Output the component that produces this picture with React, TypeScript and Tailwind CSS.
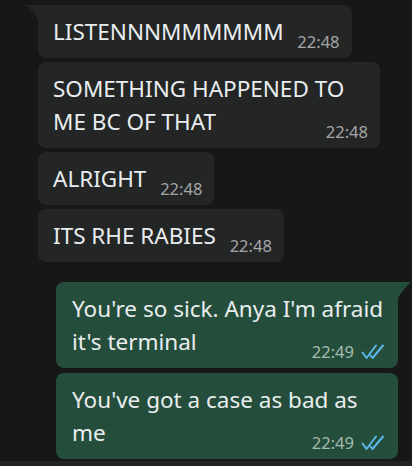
import React from 'react';

type Msg = { text: string; time: string; out?: boolean; first?: boolean };

const MESSAGES: Msg[] = [
  { text: 'LISTENNNMMMMMM', time: '22:48', first: true },
  { text: 'SOMETHING HAPPENED TO ME BC OF THAT', time: '22:48' },
  { text: 'ALRIGHT', time: '22:48' },
  { text: 'ITS RHE RABIES', time: '22:48' },
  { text: "You're so sick. Anya I'm afraid it's terminal", time: '22:49', out: true, first: true },
  { text: "You've got a case as bad as me", time: '22:49', out: true },
];

const DoubleTick = () => (
  <svg width="25" height="16" viewBox="0 0 25 16" fill="none" stroke="#5cb8e6" strokeWidth="2" strokeLinecap="round" strokeLinejoin="round">
    <path d="M1.5 8.5 L5.5 14 L15 1.5" />
    <path d="M9.5 11.5 L11.5 14 L22 1.5" />
  </svg>
);

const Bubble: React.FC<{ msg: Msg }> = ({ msg }) => {
  const { out, first } = msg;
  return (
    <div className={`relative max-w-[342px] rounded-[8px] ${out ? 'bg-[#254d3b] pl-[16px] pr-[12px]' : 'bg-[#242626] pl-[15px] pr-[12px]'} ${first ? (out ? 'rounded-tr-none' : 'rounded-tl-none') : ''} pt-[10px] pb-[10px]`}>
      {first && !out && (
        <svg className="absolute -left-[12px] top-0" width="12" height="16" viewBox="0 0 12 16">
          <path d="M0 0 H12 V16 C10 10 6 5 0 0 Z" fill="#242626" />
        </svg>
      )}
      {first && out && (
        <svg className="absolute -right-[13px] top-0" width="13" height="16" viewBox="0 0 13 16">
          <path d="M13 0 H0 V16 C3 10 8 5 13 0 Z" fill="#254d3b" />
        </svg>
      )}
      <p className="text-[22.5px] leading-[33px] text-[#e9edef]">
        {msg.text}
        <span className={`inline-block ${out ? 'w-[88px]' : 'w-[56px]'}`} />
      </p>
      <div className={`absolute bottom-[6px] right-[12px] flex items-center gap-[7px] text-[16.5px] leading-[20px] ${out ? 'text-[#a6bcb0]' : 'text-[#a3a5a6]'}`}>
        <span>{msg.time}</span>
        {out && <DoubleTick />}
      </div>
    </div>
  );
};

export default function App() {
  return (
    <div className="w-[412px] h-[466px] bg-[#161717] flex flex-col overflow-hidden" style={{ fontFamily: '"Noto Sans", "Open Sans", sans-serif' }}>
      <div className="flex-1 flex flex-col pt-[5px]">
        <div className="flex flex-col items-start gap-[4px] pl-[38px]">
          {MESSAGES.filter(m => !m.out).map((m, i) => (
            <Bubble key={i} msg={m} />
          ))}
        </div>
        <div className="flex flex-col items-end gap-[5px] pr-[14px] mt-[20px]">
          {MESSAGES.filter(m => m.out).map((m, i) => (
            <Bubble key={i} msg={m} />
          ))}
        </div>
      </div>
      <div className="h-[5px] bg-[#212323]" />
    </div>
  );
}
